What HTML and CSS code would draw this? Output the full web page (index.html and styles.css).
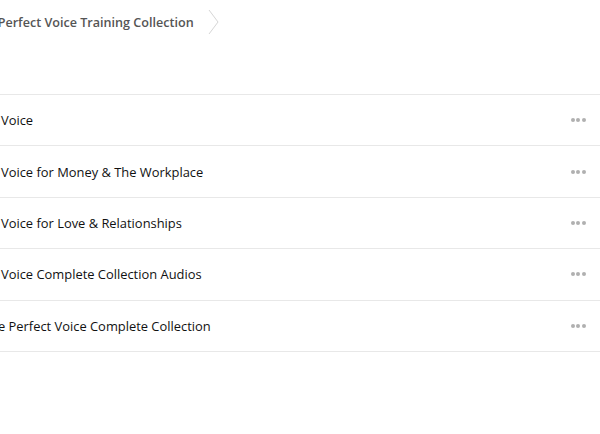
FILE: index.html
```html
<!DOCTYPE html>
<html>
<head>
<meta charset="utf-8">
<link rel="stylesheet" href="styles.css">
</head>
<body>
<div class="page">
  <div class="crumbs">
    <span class="crumb">The Perfect Voice Training Collection</span>
    <svg class="chev" width="12" height="26" viewBox="0 0 12 26"><path d="M1 1 L10 13 L1 25" fill="none" stroke="#d6d6d6" stroke-width="1"/></svg>
  </div>
  <ul class="list">
    <li class="row"><span class="title">Voice</span><span class="more"><i></i><i></i><i></i></span></li>
    <li class="row"><span class="title">Voice for Money &amp; The Workplace</span><span class="more"><i></i><i></i><i></i></span></li>
    <li class="row"><span class="title">Voice for Love &amp; Relationships</span><span class="more"><i></i><i></i><i></i></span></li>
    <li class="row"><span class="title">Voice Complete Collection Audios</span><span class="more"><i></i><i></i><i></i></span></li>
    <li class="row"><span class="title title-cut">The Perfect Voice Complete Collection</span><span class="more"><i></i><i></i><i></i></span></li>
  </ul>
</div>
</body>
</html>
```
FILE: styles.css
```css
html, body { margin: 0; padding: 0; background: #fff; }
body { font-family: "Open Sans", "Noto Sans", sans-serif; overflow: hidden; width: 600px; height: 434px; }
.page { width: 600px; overflow: hidden; }
.crumbs { display: flex; align-items: center; height: 44px; margin-left: -28px; gap: 14px; }
.crumb { font-size: 12.6px; font-weight: 600; color: #555; white-space: nowrap; }
.chev { display: block; }
.list { list-style: none; margin: 50px 0 0 0; padding: 0; border-top: 1px solid #e8e8e8; }
.row { display: flex; align-items: center; justify-content: space-between; height: 50.4px; border-bottom: 1px solid #e8e8e8; font-size: 12.9px; color: #111; }
.title { white-space: nowrap; margin-left: 1px; }
.title-cut { margin-left: -17px; }
.more { display: flex; gap: 1.6px; margin-right: 14px; }
.more i { width: 4px; height: 4px; border-radius: 50%; background: #b0b0b0; display: block; }
```
